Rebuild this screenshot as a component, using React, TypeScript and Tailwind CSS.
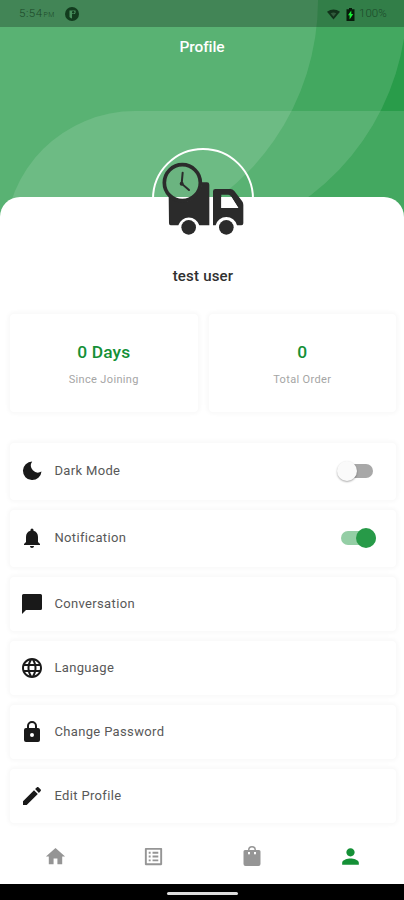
import type { ReactNode } from "react";
import { MdHome, MdLanguage, MdListAlt, MdPerson } from "react-icons/md";

function HeaderPattern() {
  return (
    <svg className="absolute inset-0" width="404" height="230" viewBox="0 0 404 230" aria-hidden="true">
      <rect width="404" height="230" fill="#299c4a" />
      <g fill="#fff" fillOpacity=".12">
        <path d="M0 0H407A246 246 0 0 1 246 231H0Z" />
        <path d="M0 0H318A246 246 0 0 1 157 231H0Z" />
        <path d="M404 111H135A130 130 0 0 0 5 241H404Z" />
      </g>
      <rect width="404" height="27" fill="#000" fillOpacity=".25" />
    </svg>
  );
}

function Truck() {
  return (
    <svg className="absolute left-[151px] top-[147px]" width="104" height="104" viewBox="63 21 312 312" aria-hidden="true">
      <circle cx="219" cy="177" r="150" fill="none" stroke="#fff" strokeWidth="6" />
      <path d="M116 165 Q155 205 196 170 Q216 152 215 127H231Q238 127 238 134V256H208A33 33 0 0 0 145 256H122Q117 256 117 250Z" fill="#2b2b2b" />
      <path fillRule="evenodd" d="M256 147H301Q308 147 313 153L336 183Q340 188 340 195V250Q340 256 334 256H321A33 33 0 0 0 257 256H249V154Q249 147 256 147ZM274 164V204H325L303 169Q300 164 295 164Z" fill="#2b2b2b" />
      <path d="M274 171H304L325 204H274Z" fill="#fff" />
      <circle cx="176" cy="262" r="22" fill="#2b2b2b" />
      <circle cx="289" cy="262" r="22" fill="#2b2b2b" />
      <circle cx="157" cy="128" r="53" fill="#6bb480" />
      <path d="M125 171H189A53 53 0 0 1 125 171Z" fill="#fff" />
      <circle cx="157" cy="128" r="54" fill="none" stroke="#2b2b2b" strokeWidth="11" />
      <path d="M158 98L155 131L177 150" fill="none" stroke="#2b2b2b" strokeWidth="6" strokeLinecap="round" />
      <circle cx="155" cy="131" r="6" fill="#2b2b2b" />
    </svg>
  );
}

function StatusBar() {
  return (
    <div className="relative flex h-[27px] items-center pt-[1px] text-[#1b4828]">
      <span className="ml-[19px] w-[46px] whitespace-nowrap text-[11.5px] font-light tracking-[0.5px]">
        5:54<span className="ml-[1px] text-[7px]">PM</span>
      </span>
      <svg width="14" height="14" viewBox="0 0 14 14" aria-hidden="true">
        <circle cx="7" cy="7" r="7" fill="#123c1e" />
        <path d="M4.5 3.5H10.5A4 4 0 0 1 10 7H7V11.5A5 5 0 0 1 4.5 10Z" fill="#488f5c" />
        <circle cx="8.2" cy="5.3" r="1.2" fill="#123c1e" />
      </svg>
      <svg className="ml-auto" width="13" height="11" viewBox="0 0 14 11" aria-hidden="true">
        <path d="M0 2.5Q7-2.5 14 2.5L7 11Z" fill="#12331b" />
        <path d="M4 4.2Q7 2.5 10 4.2L7 8Z" fill="#315b3c" />
      </svg>
      <svg className="ml-[6px]" width="9" height="13" viewBox="0 0 9 13" aria-hidden="true">
        <path d="M3 0H6V1.3H8.5V13H.5V1.3H3Z" fill="#071b0b" />
        <path d="M5.3 2.5L2 7.3H3.6V11.5L7.2 6H5.3Z" fill="#18ef35" />
      </svg>
      <span className="ml-[4px] mr-[18px] w-[27px] whitespace-nowrap text-[11.5px] font-light">100%</span>
    </div>
  );
}

function Card({ children, className }: { children: ReactNode; className: string }) {
  return <div className={`rounded-[4px] bg-white shadow-[0_0_4px_2px_#f8f8f8] ${className}`}>{children}</div>;
}

function Stat({ value, label }: { value: string; label: string }) {
  return (
    <Card className="flex h-[98px] flex-1 flex-col items-center pt-[26px]">
      <strong className="text-[17.4px] font-medium leading-6 tracking-[0.1px] text-[#149036]">{value}</strong>
      <span className="mt-[8px] text-[11px] leading-4 tracking-[0.35px] text-[#a5a5a5]">{label}</span>
    </Card>
  );
}

function Switch({ on = false }: { on?: boolean }) {
  return (
    <span className={`ml-auto flex h-[14px] items-center rounded-full ${on ? "mr-[20px] w-[35px] justify-end bg-[#94cea5]" : "mr-[23px] w-[34px] bg-[#a8a8a8]"}`}>
      <span className={`h-5 w-5 shrink-0 rounded-full ${on ? "bg-[#279a48]" : "-ml-[2px] bg-[#fafafa] shadow-[0_1px_2px_#0005]"}`} />
    </span>
  );
}

function Glyph({ d }: { d: string }) {
  return <svg width="24" height="24" viewBox="0 0 24 24" fill="currentColor" aria-hidden="true"><path fillRule="evenodd" d={d} /></svg>;
}

function Row({ icon, label, tall = false, children }: { icon: ReactNode; label: string; tall?: boolean; children?: ReactNode }) {
  return (
    <Card className={`flex items-center ${tall ? "h-[57px] pb-[1px]" : "h-[54px]"}`}>
      <span className="ml-[10px] flex w-6 shrink-0 text-[#191919]">{icon}</span>
      <span className="ml-[10.4px] text-[13px] tracking-[0.35px] text-[#585858]">{label}</span>
      {children}
    </Card>
  );
}

export default function App() {
  return (
    <div className="relative flex h-[900px] w-[404px] flex-col overflow-hidden bg-white font-['Roboto',sans-serif]">
      <header className="relative h-[230px] shrink-0">
        <HeaderPattern />
        <StatusBar />
        <h1 className="relative mt-[10px] text-center text-[15.5px] font-medium leading-5 tracking-[-0.1px] text-white">Profile</h1>
      </header>
      <main className="relative -mt-[33px] flex flex-1 flex-col rounded-t-[20px] bg-white pl-[10px] pr-[8px]">
        <h2 className="mt-[69px] text-center text-[15px] font-medium leading-5 tracking-[0.2px] text-[#303030]">test user</h2>
        <section className="mt-[28px] flex gap-[11px]">
          <Stat value="0 Days" label="Since Joining" />
          <Stat value="0" label="Total Order" />
        </section>
        <section className="mt-[31px] flex flex-col gap-[10px]">
          <Row tall label="Dark Mode" icon={<Glyph d="M12.2 2.5A7 7 0 0 0 21.5 12.5A9.3 9.3 0 1 1 12.2 2.5Z" />}><Switch /></Row>
          <Row tall label="Notification" icon={<Glyph d="M12 22c1.1 0 2-.9 2-2h-4c0 1.1.9 2 2 2Zm6-6v-5c0-3.1-1.6-5.6-4.5-6.3V4a1.5 1.5 0 0 0-3 0v.7C7.6 5.4 6 7.9 6 11v5l-2 2v1h16v-1Z" />}><Switch on /></Row>
          <Row label="Conversation" icon={<Glyph d="M20.5 2H3.5Q2 2 2 3.5V22L6 18H20.5Q22 18 22 16.5V3.5Q22 2 20.5 2Z" />} />
          <Row label="Language" icon={<MdLanguage size={24} />} />
          <Row label="Change Password" icon={<Glyph d="M18 8h-1V6A5 5 0 0 0 7 6v2H6Q4 8 4 10v10q0 2 2 2h12q2 0 2-2V10q0-2-2-2ZM9 6a3 3 0 0 1 6 0v2H9Zm3 11a2 2 0 1 1 0-4 2 2 0 0 1 0 4Z" />} />
          <Row label="Edit Profile" icon={<Glyph d="M3 17.3V21h3.7L17.8 9.9 14 6.2ZM20.7 7c.4-.4.4-1 0-1.4l-2.3-2.3c-.4-.4-1-.4-1.4 0L15.1 5.1l3.8 3.8Z" />} />
        </section>
      </main>
      <Truck />
      <nav className="relative flex h-[56px] shrink-0 items-center bg-white pl-[6px] pr-[4px] text-[#959595]">
        <span className="flex flex-1 justify-center"><MdHome size={23} /></span>
        <span className="flex flex-1 justify-center"><MdListAlt size={23} /></span>
        <span className="flex flex-1 justify-center"><Glyph d="M19 6h-3a4 4 0 0 0-8 0H5Q3.5 6 3.5 7.5V20Q3.5 22 5.5 22H18.5Q20.5 22 20.5 20V7.5Q20.5 6 19 6ZM12 3.5A2.5 2.5 0 0 1 14.5 6h-5A2.5 2.5 0 0 1 12 3.5ZM8 8h2v1.5a1 1 0 0 1-2 0Zm6 0h2v1.5a1 1 0 0 1-2 0Z" /></span>
        <span className="flex flex-1 justify-center text-[#149036]"><MdPerson size={25} /></span>
      </nav>
      <footer className="flex h-4 shrink-0 items-center justify-center bg-black pt-[2px]">
        <span className="h-[3px] w-[71px] rounded-sm bg-[#ddd]" />
      </footer>
    </div>
  );
}
